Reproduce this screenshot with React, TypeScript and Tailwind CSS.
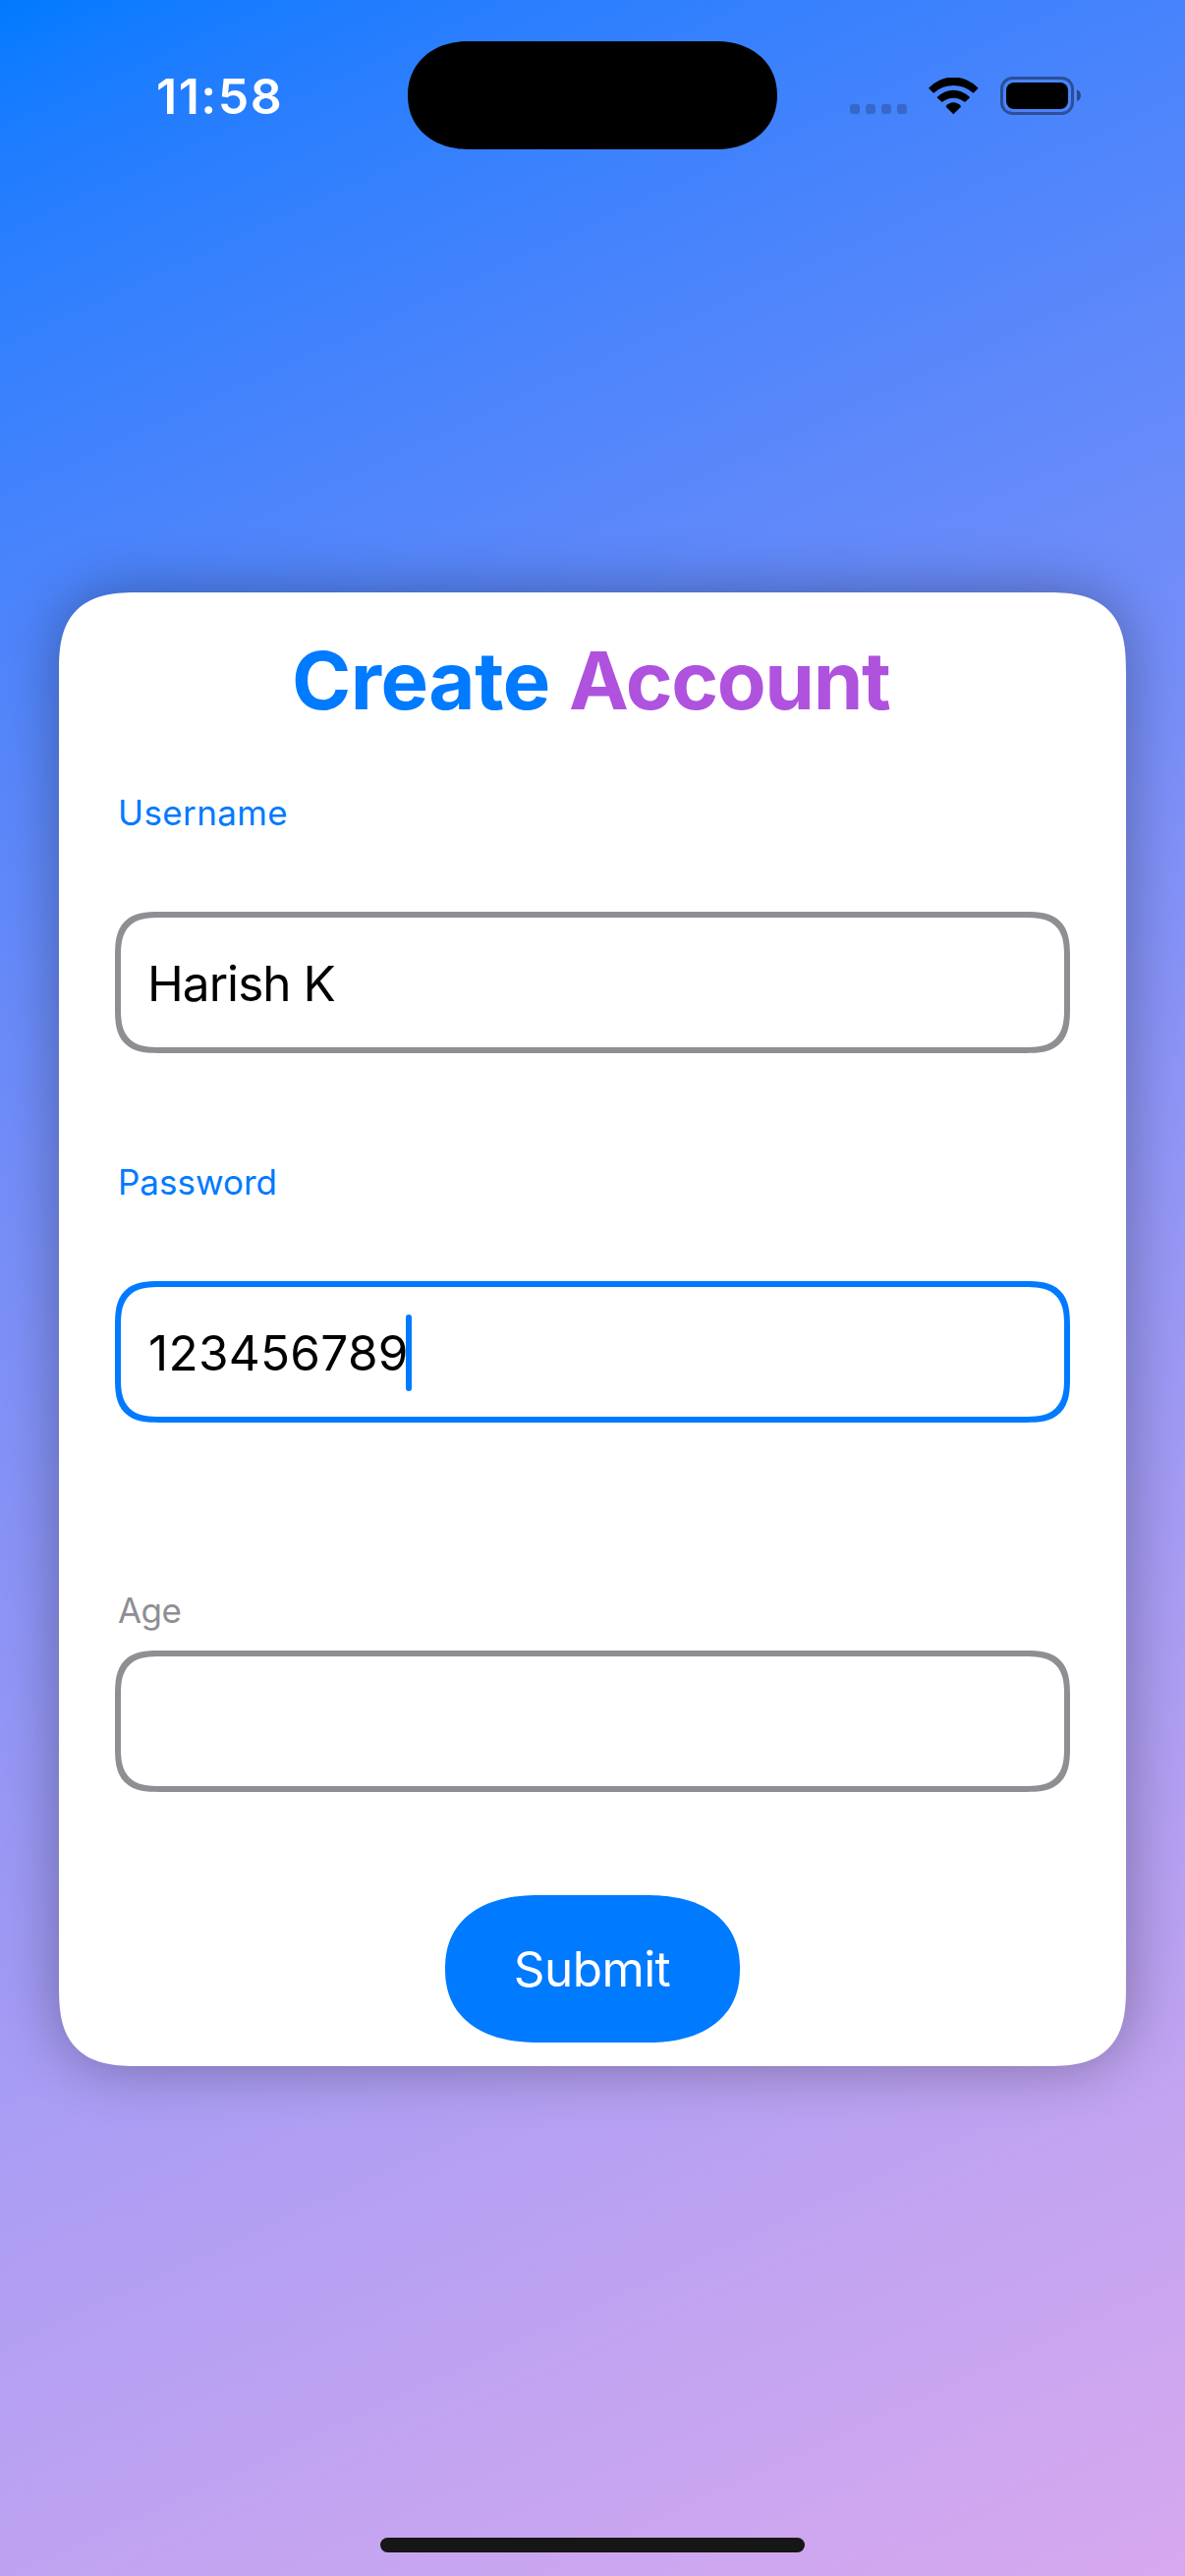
import type { ReactNode } from "react";

function SignalDots() {
  return (
    <div className="mt-[106px] flex gap-[6px]">
      {[0, 1, 2, 3].map((i) => (
        <span key={i} className="size-[10px] rounded-[3px] bg-black/20" />
      ))}
    </div>
  );
}

function WifiIcon() {
  return (
    <svg viewBox="496 177 152 112" className="mt-[79px] ml-[22px] h-[37.33px] w-[50.67px]" fill="#000">
      <path d="M496.500 208.500A103 103 0 0 1 647.500 208.500Q647.500 210 646.500 211L634.500 223Q632.500 224.800 630.500 223A88 88 0 0 0 513.500 223Q511.500 224.800 509.500 223L497.500 211Q496.500 210 496.500 208.500Z" />
      <path d="M522.500 236Q546 215 572 215T621.500 236Q622.500 237.500 621 239L608.500 250.500Q607 252 605 250.500Q590 239 572 239T539 250.500Q537 252 535.500 250.500L523 239Q521.500 237.500 522.500 236Z" />
      <path d="M549.500 264Q559 253 572 253T594.500 264Q595.500 265.500 594 267L573.500 287.500Q572 289 570.500 287.500L550 267Q548.500 265.500 549.500 264Z" />
    </svg>
  );
}

function BatteryIcon() {
  return (
    <svg viewBox="714 174 246 117" className="mt-[78px] ml-[22.33px] h-[39px] w-[82px]">
      <rect x="718.5" y="178.500" width="216" height="108" rx="33" fill="none" stroke="#000" strokeOpacity="0.4" strokeWidth="9" />
      <rect x="732" y="192" width="189" height="81" rx="24" fill="#000" />
      <path d="M948 214c7 3 12 10 12 18s-5 15-12 18z" fill="#000" fillOpacity="0.45" />
    </svg>
  );
}

function StatusBar() {
  return (
    <header className="flex h-[153px] shrink-0 items-start">
      <div className="w-[415px] pt-[68px] pl-[159px] text-[50px] leading-[60px] font-semibold tracking-[1.5px] text-white">
        11:58
      </div>
      <div className="mt-[42px] h-[110px] w-[376px] rounded-[55px] bg-black supports-[corner-shape:squircle]:rounded-[62px/55px] supports-[corner-shape:squircle]:[corner-shape:superellipse(1.1)]" />
      <div className="flex items-start pl-[74px]">
        <SignalDots />
        <WifiIcon />
        <BatteryIcon />
      </div>
    </header>
  );
}

function Label({ className, children }: { className: string; children: ReactNode }) {
  return <label className={`ml-[3px] block text-[35px] leading-[48px] ${className}`}>{children}</label>;
}

function Field({ className, children }: { className: string; children?: ReactNode }) {
  return (
    <div
      className={`flex h-[144px] w-full items-center rounded-[34px] border-[6px] pt-[1px] pl-[27px] text-[49.5px] leading-[60px] text-black supports-[corner-shape:squircle]:rounded-[45px] supports-[corner-shape:squircle]:[corner-shape:superellipse(1.48)] ${className}`}
    >
      {children}
    </div>
  );
}

export default function App() {
  return (
    <div className="h-[2622px] w-[1206px] overflow-hidden bg-white font-['Inter',sans-serif]">
      <div className="flex h-full flex-col bg-[linear-gradient(155.3deg_in_oklab,#007aff,rgb(175_82_222_/_0.5))]">
        <StatusBar />

        <main className="mx-[60px] mt-[450px] flex h-[1500px] flex-col rounded-[60px] bg-white px-[57px] pt-[40px] shadow-[0_0_60px_rgba(0,0,0,0.33)] supports-[corner-shape:squircle]:rounded-[82px] supports-[corner-shape:squircle]:[corner-shape:superellipse(1.48)]">
          <h1 className="pl-[180px] text-[81.5px] leading-[99px] font-bold whitespace-nowrap text-[#007aff]">
            <span className="tracking-[-0.5px]">Create</span>{" "}
            <span className="tracking-[-1.4px] text-[#af52de]">Account</span>
          </h1>

          <div className="mt-[61px]">
            <Label className="tracking-[0.39px] text-[#007aff]">Username</Label>
            <div className="mt-[77px]">
              <Field className="border-[#8e8e93]">
                <span className="tracking-[-0.96px]">Harish K</span>
              </Field>
            </div>
          </div>

          <div className="mt-[107px]">
            <Label className="text-[#007aff]">Password</Label>
            <div className="mt-[77px]">
              <Field className="border-[#007aff]">
                <span className="ml-[1px] tracking-[0.28px]">123456789</span>
                <span className="-ml-[3px] h-[78px] w-[6px] rounded-[3px] bg-[#007aff]" />
              </Field>
            </div>
          </div>

          <div className="mt-[167px]">
            <Label className="tracking-[-0.6px] text-[#8e8e93]">Age</Label>
            <div className="mt-[17px]">
              <Field className="border-[#8e8e93]" />
            </div>
          </div>

          <button className="mt-[105px] h-[150px] w-[300px] self-center rounded-[75px] bg-[#007aff] pr-[1px] text-[49.5px] leading-[60px] tracking-[-0.6px] text-white supports-[corner-shape:squircle]:rounded-[95px/75px] supports-[corner-shape:squircle]:[corner-shape:superellipse(1.2)]">
            Submit
          </button>
        </main>

        <div className="mt-auto mb-[24px] h-[15px] w-[432px] self-center rounded-full bg-[#161616]" />
      </div>
    </div>
  );
}
